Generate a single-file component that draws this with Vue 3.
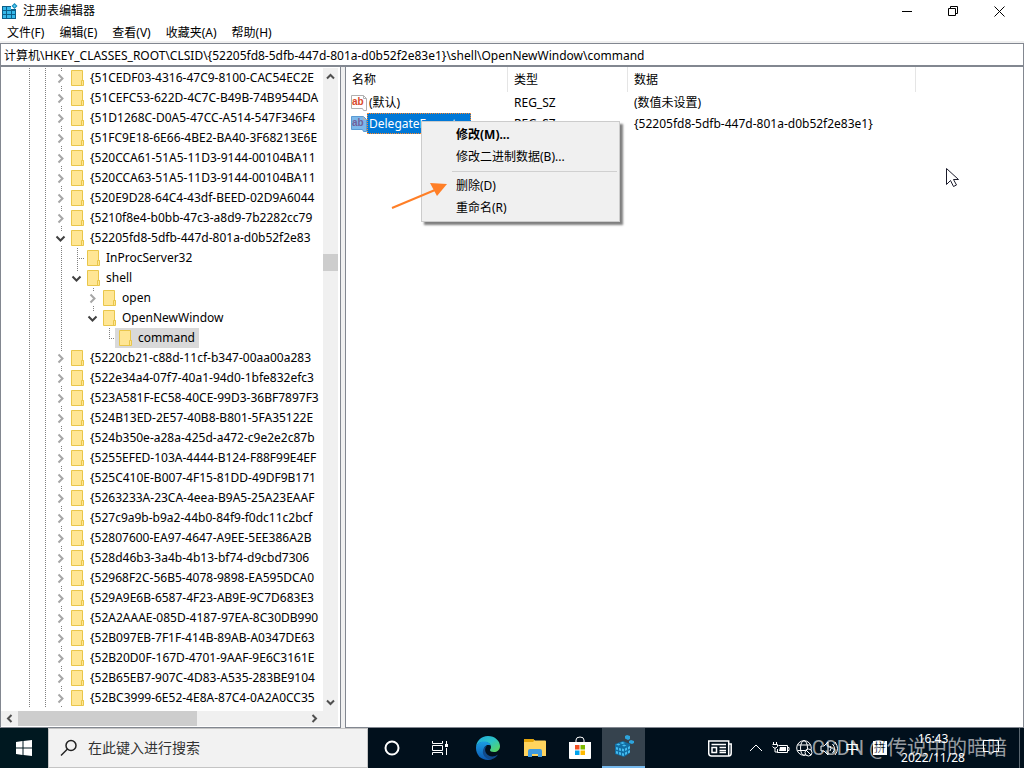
<script setup>
import { ref } from 'vue'

const address = ref('计算机\\HKEY_CLASSES_ROOT\\CLSID\\{52205fd8-5dfb-447d-801a-d0b52f2e83e1}\\shell\\OpenNewWindow\\command')
const menus = ['文件(F)', '编辑(E)', '查看(V)', '收藏夹(A)', '帮助(H)']

const key = (name) => ({ name, cells: ['line', 'line', 'closed'] })
const before = [
  '{51CEDF03-4316-47C9-8100-CAC54EC2E',
  '{51CEFC53-622D-4C7C-B49B-74B9544DA',
  '{51D1268C-D0A5-47CC-A514-547F346F4',
  '{51FC9E18-6E66-4BE2-BA40-3F68213E6E',
  '{520CCA61-51A5-11D3-9144-00104BA11',
  '{520CCA63-51A5-11D3-9144-00104BA11',
  '{520E9D28-64C4-43df-BEED-02D9A6044',
  '{5210f8e4-b0bb-47c3-a8d9-7b2282cc79'
]
const after = [
  '{5220cb21-c88d-11cf-b347-00aa00a283',
  '{522e34a4-07f7-40a1-94d0-1bfe832efc3',
  '{523A581F-EC58-40CE-99D3-36BF7897F3',
  '{524B13ED-2E57-40B8-B801-5FA35122E',
  '{524b350e-a28a-425d-a472-c9e2e2c87b',
  '{5255EFED-103A-4444-B124-F88F99E4EF',
  '{525C410E-B007-4F15-81DD-49DF9B171',
  '{5263233A-23CA-4eea-B9A5-25A23EAAF',
  '{527c9a9b-b9a2-44b0-84f9-f0dc11c2bcf',
  '{52807600-EA97-4647-A9EE-5EE386A2B',
  '{528d46b3-3a4b-4b13-bf74-d9cbd7306',
  '{52968F2C-56B5-4078-9898-EA595DCA0',
  '{529A9E6B-6587-4F23-AB9E-9C7D683E3',
  '{52A2AAAE-085D-4187-97EA-8C30DB990',
  '{52B097EB-7F1F-414B-89AB-A0347DE63',
  '{52B20D0F-167D-4701-9AAF-9E6C3161E',
  '{52B65EB7-907C-4D83-A535-283BE9104',
  '{52BC3999-6E52-4E8A-87C4-0A2A0CC35'
]
const rows = [
  ...before.map(key),
  { name: '{52205fd8-5dfb-447d-801a-d0b52f2e83', cells: ['line', 'line', 'open'] },
  { name: 'InProcServer32', cells: ['line', 'line', 'line', 'tee'] },
  { name: 'shell', cells: ['line', 'line', 'line', 'open last'] },
  { name: 'open', cells: ['line', 'line', 'line', 'none', 'closed'] },
  { name: 'OpenNewWindow', cells: ['line', 'line', 'line', 'none', 'open last'] },
  { name: 'command', cells: ['line', 'line', 'line', 'none', 'none', 'elbow'], selected: true },
  ...after.map(key)
]
</script>

<template>
  <div class="screen">
    <header class="titlebar">
      <svg class="app-icon" width="16" height="16" viewBox="0 0 16 16">
        <path d="M0 3h9v3h5v10H0z" fill="#0b5f8a" />
        <path d="M1 4h3v3H1zM5 4h4v3H5zM1 8h3v3H1zM5 8h4v3H5zM1 12h3v3H1zM5 12h4v3H5zM10 8h3v3h-3zM10 12h3v3h-3z" fill="#35b8ea" />
        <path d="M12.500 0l3 3-3 3-3-3z" fill="#1488b8" /><path d="M12.500 1.500l1.500 1.500-1.500 1.500-1.500-1.500z" fill="#52ccf2" />
      </svg>
      <h1>注册表编辑器</h1>
      <div class="window-buttons">
        <button aria-label="最小化"><svg width="11" height="11"><path d="M0 5.500h10" /></svg></button>
        <button aria-label="还原"><svg width="11" height="11"><path d="M.5 2.500h7v7h-7zM2.500 2.500v-2h7v7h-2" /></svg></button>
        <button aria-label="关闭"><svg width="11" height="11"><path d="M.5.5l10 10M10.500.5l-10 10" /></svg></button>
      </div>
    </header>
    <nav class="menubar">
      <button v-for="m in menus" :key="m">{{ m }}</button>
    </nav>
    <input v-model="address" class="address" aria-label="地址" />

    <main class="panes">
      <section class="tree-pane">
        <div class="tree-area">
          <ul class="tree">
            <li v-for="row in rows" :key="row.name">
              <span v-for="(c, i) in row.cells" :key="i" class="cell" :class="c">
                <svg v-if="c === 'closed'" class="chevron" width="12" height="13"><path d="M3.500 2.500l4 4-4 4" stroke="#a6a6a6" /></svg>
                <svg v-else-if="c.startsWith('open')" class="chevron" width="12" height="13"><path d="M1.500 4.500l4 4 4-4" stroke="#404040" /></svg>
              </span>
              <button class="node" :class="{ selected: row.selected }">
                <svg class="folder" width="13" height="16" viewBox="0 0 13 16">
                  <path d="M.5.5h11v10h1v5h-12z" fill="#ffe694" stroke="#e9c64b" />
                  <path d="M10.500 15v-4.500h2" fill="none" stroke="#e9c64b" />
                </svg>
                <span>{{ row.name }}</span>
              </button>
            </li>
          </ul>
          <div class="vscroll">
            <svg width="15" height="17"><path d="M4 10.500l3.500-3.500 3.500 3.500" /></svg>
            <div class="vtrack"><div class="vthumb"></div></div>
            <svg width="15" height="17"><path d="M4 6.500l3.500 3.500 3.500-3.500" /></svg>
          </div>
        </div>
        <div class="hscroll">
          <svg width="17" height="15"><path d="M10.500 4L7 7.500l3.500 3.500" /></svg>
          <div class="htrack"><div class="hthumb"></div></div>
          <svg width="17" height="15"><path d="M6.500 4l3.500 3.500L6.500 11" /></svg>
        </div>
      </section>

      <section class="value-pane">
        <table>
          <colgroup><col class="c1" /><col class="c2" /><col class="c3" /><col /></colgroup>
          <thead><tr><th>名称</th><th>类型</th><th>数据</th><th class="rest"></th></tr></thead>
          <tbody>
            <tr v-for="n in 2" :key="n">
              <td class="name" :class="{ chosen: n === 2 }">
                <div class="value-name">
                  <svg width="16" height="16" viewBox="0 0 16 16">
                    <path class="sheet" d="M.5.5h12l3 3v12h-3l-1-2h-11z" />
                    <path class="fold" d="M12.500.5v3h3" />
                    <text x="1" y="10" class="ab">ab</text>
                  </svg>
                  <span>{{ n === 1 ? '(默认)' : 'DelegateExecute' }}</span>
                </div>
              </td>
              <td>REG_SZ</td>
              <td colspan="2">{{ n === 1 ? '(数值未设置)' : '{52205fd8-5dfb-447d-801a-d0b52f2e83e1}' }}</td>
            </tr>
          </tbody>
        </table>
      </section>
    </main>

    <div class="context-menu" role="menu">
      <button role="menuitem" class="default">修改(M)...</button>
      <button role="menuitem">修改二进制数据(B)...</button>
      <hr />
      <button role="menuitem">删除(D)</button>
      <button role="menuitem">重命名(R)</button>
    </div>
    <svg class="arrow" width="58" height="30"><path d="M1 27L44 9" stroke="#ff7f27" stroke-width="2" /><path d="M56 3L39 2l7 13z" fill="#ff7f27" /></svg>
    <svg class="cursor" width="13" height="20"><path d="M.5.5v16l4-4 3 6 3-1.500-3-5.500h5z" fill="#fff" stroke="#1a1a2a" /></svg>

    <footer class="taskbar">
      <button class="start" aria-label="开始">
        <svg width="16" height="16"><path d="M0 2l6.500-1v6.500H0zM7.500 1L16 0v7.500H7.500zM0 8.500h6.500V15L0 14zM7.500 8.500H16V16l-8.500-1z" fill="#fff" /></svg>
      </button>
      <label class="search">
        <svg width="18" height="18"><circle cx="11" cy="6.500" r="5" /><path d="M7.500 10L1 16.500" /></svg>
        <input placeholder="在此键入进行搜索" />
      </label>
      <div class="apps">
        <button class="wide" aria-label="Cortana"><svg width="18" height="18"><circle cx="9" cy="9" r="6.500" fill="none" stroke="#fff" stroke-width="2" /></svg></button>
        <button class="wide" aria-label="任务视图">
          <svg width="18" height="16" fill="none" stroke="#fff"><path d="M1.500 1v2.500h10V1M1.500 15v-2.500h10V15M1.500 5.500h10v5h-10zM15.500 1v3M15.500 8v7" /><path d="M14 4h3v3h-3z" fill="#fff" stroke="none" /></svg>
        </button>
        <button class="edge" aria-label="Edge">
          <svg width="24" height="24" viewBox="0 0 24 24">
            <defs>
              <linearGradient id="eg" x1="0" y1="0" x2="1" y2="1"><stop offset="0" stop-color="#20a9e0" /><stop offset=".5" stop-color="#2cc4c4" /><stop offset="1" stop-color="#62d94c" /></linearGradient>
              <linearGradient id="eb" x1="0" y1="0" x2="0" y2="1"><stop offset="0" stop-color="#1b9de2" /><stop offset="1" stop-color="#0b57b0" /></linearGradient>
            </defs>
            <path d="M0 12C0 5 5 0 12 0s12 5 12 10c0 4-3 6-6 6-3 0-4-1-4-2s1-1 1-3c0-3-3-5-7-5-5 0-8 3-8 6z" fill="url(#eg)" />
            <path d="M0 12c0-4 3.500-6.500 8-6.500 4 0 6.500 2 6.500 4C10 8 8 11 8 14c0 4 3 8 8 9-1.300.7-2.600 1-4 1C5 24 0 19 0 12z" fill="url(#eb)" />
            <path d="M11 9.500c-2 2-2.500 5-1 7.500 2.500 4 8 4.500 12 1.500-1.500 2.500-4 4.500-7 5-5 0-9-4.500-8-9 .4-2.500 2-4.500 4-5z" fill="#114a8b" />
          </svg>
        </button>
        <button aria-label="文件资源管理器">
          <svg width="22" height="18"><path d="M0 1q0-1 1-1h8l2 1.500h10q1 0 1 1V17H0z" fill="#ffd45e" /><path d="M0 1q0-1 1-1h8l1.500 1.500L9 3H0z" fill="#e5a50a" /><path d="M4 18v-6q0-2 2-2h10q2 0 2 2v6h-4v-3H8v3z" fill="#3f9be0" /></svg>
        </button>
        <button aria-label="Microsoft Store">
          <svg width="24" height="24"><path d="M8 6V4q0-3 4-3t4 3v2" fill="none" stroke="#fff" /><path d="M1 6h22v16q0 1-1 1H2q-1 0-1-1z" fill="#fff" /><path d="M7 9h4.500v4.500H7z" fill="#f25022" /><path d="M12.500 9H17v4.500h-4.500z" fill="#7fba00" /><path d="M7 14.500h4.500V19H7z" fill="#00a4ef" /><path d="M12.500 14.500H17V19h-4.500z" fill="#ffb900" /></svg>
        </button>
        <button class="active" aria-label="注册表编辑器">
          <svg width="22" height="24">
            <path d="M2 9l8-3 7 3v9l-6 4-9-3z" fill="#126ea3" />
            <path d="M3 9.500l2.500-1 2 1-2 1zM7 8l2.500-1 2.500 1-2.500 1zM9 10.500l2-1 2.500 1-2.500 1zM3 12l2 .5V15l-2-.5zM6 13l2 .5V16l-2-.5zM9 13.500l2 .5v2.500L9 16zM3 16l2 .5V19l-2-.5zM6 17l2 .5V20l-2-.5zM9 18l2 .5V21l-2-.5zM12 13.500l2-1V15l-2 1zM15 12l2-1v2.500l-2 1zM12 17.500l2-1V19l-2 1zM15 16l2-1v2.500l-2 1z" fill="#45bcee" />
            <path d="M14 0l3 1v3l-2 1-3-1.500V1zM18 5l3 1v2l-2 1-3-1V6z" fill="#2da4dc" />
          </svg>
        </button>
      </div>
      <div class="tray">
        <svg width="24" height="17" class="news"><path d="M.7 1h20v15H3.500Q.7 16 .7 13zM20.700 4h2.500v9q0 3-2.500 3M11.500 7.500h6.500M11.500 10.500h6.500M3.500 4.500h14.500" /><path d="M4 7.500h4.500v5H4zM11.500 12.500h6.500" /></svg>
        <svg width="14" height="8" class="up"><path d="M1 7l6-6 6 6" /></svg>
        <svg width="18" height="14" class="battery"><path d="M6.500 4.500h9v7h-10V8M15.500 6.500h1.500v3h-1.500M1.500 1v2M4.500 1v2M.5 3.500h5v2l-1.500 1.500H2L.5 5.500M3 7v4h3" /><path d="M8 6h6v4H7z" fill="#fff" stroke="none" /></svg>
        <svg width="17" height="17" class="globe"><circle cx="8" cy="8" r="7.300" /><ellipse cx="8" cy="8" rx="3.500" ry="7.300" /><path d="M1.500 5h13M1.500 10.500h8" /><circle cx="12.500" cy="12.500" r="3.500" fill="#01101c" /><path d="M10 10l5 5" /></svg>
        <svg width="18" height="15" class="sound"><path d="M1 5h3l4-4v13l-4-4H1zM10 5q2 2.500 0 5M12.500 3q4 4.500 0 9M15 1q5 6.500 0 13" /></svg>
        <span class="lang">中</span>
        <span class="ime">拼</span>
        <div class="clock"><span>16:43</span><span>2022/11/28</span></div>
        <svg width="17" height="16" class="notice"><path d="M.5.5h15v11h-5l-2.500 3-2.500-3h-5z" /></svg>
      </div>
      <div class="peek"></div>
    </footer>
    <div class="watermark">CSDN @传说中的暗暗</div>
  </div>
</template>

<style>
body { overflow: hidden; }
</style>

<style scoped>
.screen {
  position: relative;
  display: flex;
  flex-direction: column;
  height: 100vh;
  overflow: hidden;
  background: #fff;
  color: #000;
  font: 12px/20px "Noto Sans", "Noto Sans CJK SC", sans-serif;
}
button, input { font: inherit; color: inherit; border: 0; padding: 0; margin: 0; background: none; border-radius: 0; outline: 0; }
svg { display: block; flex: none; }

.titlebar { display: flex; align-items: center; height: 22px; padding-left: 2px; }
.titlebar h1 { margin: 0 0 0 5px; font-size: 12px; font-weight: 400; flex: 1; }
.window-buttons { display: flex; margin-right: 2px; }
.window-buttons button { width: 46px; height: 20px; display: grid; place-items: center; }
.window-buttons path { fill: none; stroke: #000; }
.menubar { display: flex; gap: 15px; height: 19px; padding-left: 7px; border-bottom: 2px solid #f0f0f0; }
.menubar button { line-height: 21px; }
.address { box-sizing: border-box; height: 24px; flex: none; border: 1px solid #828790; border-bottom-width: 2px; padding: 0 3px; font-size: 12px; }

.panes { display: flex; flex: 1; min-height: 0; background: #f0f0f0; }
.tree-pane { display: flex; flex-direction: column; width: 341px; flex: none; box-sizing: border-box; border: solid #828790; border-width: 0 1px 1px; background: #fff; margin-right: 4px; padding-right: 2px; }
.tree-area { display: flex; flex: 1; min-height: 0; }
.tree { flex: 1; min-width: 0; margin: 0; padding: 1px 0 0 20px; list-style: none; overflow: hidden; }
.tree li { display: flex; height: 20px; }
.cell { width: 16px; flex: none; display: flex; align-items: center; justify-content: center; background: repeating-linear-gradient(#808080 0 1px, #fff 1px 2px) 8px 0 / 1px 100% no-repeat; }
.cell.none { background: none; }
.cell.last { background-size: 1px 6px; }
.cell.tee { background: repeating-linear-gradient(#808080 0 1px, #fff 1px 2px) 8px 0 / 1px 100% no-repeat, repeating-linear-gradient(90deg, #808080 0 1px, #fff 1px 2px) 8px 10px / 8px 1px no-repeat; }
.cell.elbow { background: repeating-linear-gradient(#808080 0 1px, #fff 1px 2px) 8px 0 / 1px 10px no-repeat, repeating-linear-gradient(90deg, #808080 0 1px, #fff 1px 2px) 8px 10px / 8px 1px no-repeat; }
.chevron { background: #fff; }
.chevron path { fill: none; stroke-width: 2; }
.node { display: flex; align-items: center; padding: 0 4px 0 2px; gap: 6px; white-space: nowrap; line-height: 20px; }
.node.selected { background: #d9d9d9; margin-left: -2px; padding-left: 4px; }
.vscroll { width: 15px; flex: none; display: flex; flex-direction: column; background: #f0f0f0; margin-top: 1px; }
.vtrack { flex: 1; }
.vthumb { height: 17px; margin-top: 169px; background: #cdcdcd; }
.vscroll path, .hscroll path { fill: none; stroke: #505050; stroke-width: 2; }
.hscroll { display: flex; height: 15px; flex: none; background: #f0f0f0; margin-bottom: 1px; padding-right: 15px; }
.htrack { flex: 1; }
.hthumb { width: 62%; height: 15px; background: #cdcdcd; }

.value-pane { flex: 1; min-width: 0; background: #fff; border: solid #828790; border-width: 0 1px 1px; }
table { width: 100%; table-layout: fixed; border-collapse: separate; border-spacing: 0; }
.c1 { width: 162px; }
.c2 { width: 120px; }
.c3 { width: 288px; }
th { height: 25px; box-sizing: border-box; font-weight: 400; text-align: left; padding: 0 0 0 6px; border-right: 1px solid #e5e5e5; }
th.rest { border: 0; }
td { padding: 0 0 0 6px; height: 21px; line-height: 21px; white-space: nowrap; }
td.name { padding-left: 5px; }
.value-name { display: flex; align-items: center; }
.value-name span { padding: 0 2px; }
.sheet { fill: #fff; stroke: #b0b0b0; }
.fold { fill: none; stroke: #b0b0b0; }
.ab { font: 700 10px "Liberation Sans", sans-serif; fill: #d9482b; }
.chosen .sheet { fill: #7db8ea; stroke: #5a9bd4; }
.chosen .ab { fill: #72619a; }
.chosen span { background: #0078d7; color: #fff; outline: 1px dotted #ff8728; outline-offset: -1px; padding-right: 8px; }

.context-menu { position: absolute; left: 421px; top: 121px; width: 193px; padding: 2px; border: 1px solid #ccc; background: #f0f0f0; box-shadow: 3px 3px 2px rgba(0, 0, 0, .5); display: flex; flex-direction: column; }
.context-menu button { height: 22px; text-align: left; padding-left: 32px; line-height: 22px; }
.context-menu .default { font-weight: 700; }
.context-menu hr { margin: 3px 0 3px 28px; width: auto; border: 0; height: 1px; background: #d0d0d0; }
.arrow { position: absolute; left: 391px; top: 181px; }
.cursor { position: absolute; left: 946px; top: 168px; }

.taskbar { height: 40px; flex: none; display: flex; background: #01101c; color: #fff; }
.start { width: 48px; display: grid; place-items: center; background: #001820; }
.search { flex: 0 1 320px; box-sizing: border-box; display: flex; align-items: center; gap: 10px; padding-left: 11px; background: #f2f2f2; border: 1px solid #c4c4c4; color: #333; }
.search circle, .search path { fill: none; stroke: #222; stroke-width: 1.500; }
.search input { flex: 1; min-width: 0; font-size: 14px; }
.search input::placeholder { color: #333; opacity: 1; }
.apps { display: flex; flex: 1; }
.apps button { width: 45px; display: grid; place-items: center; }
.apps .wide { width: 48px; }
.apps .edge { width: 48px; }
.apps .active { width: 43px; background: #36434e; border-bottom: 2px solid #76b9ed; }
.tray { display: flex; align-items: center; flex: none; }
.tray svg { fill: none; stroke: #fff; stroke-width: 1; }
.tray .news { margin-right: 17px; stroke-width: 1.500; }
.tray .up { margin-right: 9px; }
.tray .battery { margin-right: 6px; }
.tray .globe { margin-right: 7px; }
.tray .sound { margin-right: 7px; }
.lang { width: 14px; font-size: 14px; margin-right: 14px; }
.ime { width: 14px; height: 14px; background: #fff; color: #01101c; font-size: 12px; line-height: 14px; text-align: center; margin-right: 12px; }
.clock { display: flex; flex-direction: column; align-items: center; width: 68px; line-height: 19px; margin-right: 16px; }
.peek { width: 4px; border-left: 1px solid #5b6770; margin-left: 19px; }
.watermark { position: absolute; right: 17px; bottom: 6px; font: 20px/28px Roboto, "Noto Sans CJK SC", sans-serif; color: rgba(255, 255, 255, .6); white-space: nowrap; }
</style>
